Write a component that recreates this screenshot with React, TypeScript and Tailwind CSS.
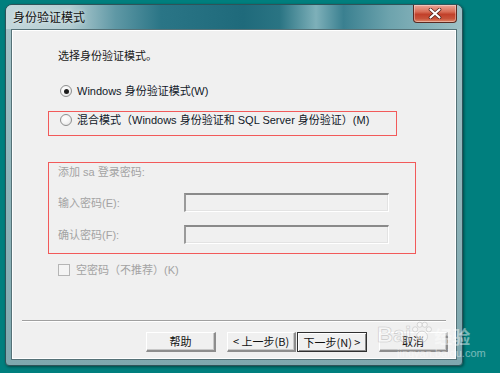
import React from "react";

const font = { fontFamily: '"Liberation Sans", "Noto Sans CJK SC", sans-serif' };

function Radio({ checked }: { checked?: boolean }) {
  return (
    <span className="w-[12px] h-[12px] rounded-full border border-[#8e8f8f] bg-[radial-gradient(circle_at_40%_35%,#ffffff_0%,#f4f4f4_50%,#d8d8d8_100%)] flex items-center justify-center shrink-0">
      {checked && <span className="w-[5px] h-[5px] rounded-full bg-[#1d1d1d]" />}
    </span>
  );
}

function Input() {
  return (
    <div className="w-[205px] h-[19px] bg-[#f0f0f0] border-t-2 border-l-2 border-b border-r border-t-[#8a8a8a] border-l-[#9a9a9a] border-b-[#ffffff] border-r-[#ffffff] shadow-[inset_-1px_-1px_0_#e3e3e3]" />
  );
}

function Btn({ children, w, focus }: { children: React.ReactNode; w: string; focus?: boolean }) {
  return (
    <div
      className={
        "h-[20px] flex items-center justify-center text-[11px] text-[#111] bg-[#f0f0f0] " +
        w +
        (focus
          ? " border border-[#303030] shadow-[inset_1px_1px_0_#ffffff,inset_-1px_-1px_0_#8a8a8a]"
          : " border-t border-l border-b-2 border-r-2 border-t-[#ffffff] border-l-[#ffffff] border-b-[#8d8d8d] border-r-[#8d8d8d] shadow-[inset_-1px_-1px_0_#c8c8c8]")
      }
      style={{ fontFamily: '"Noto Sans CJK SC", "Liberation Mono", monospace' }}
    >
      {children}
    </div>
  );
}

export default function App() {
  return (
    <div className="w-[500px] h-[373px] bg-[#007f7e] overflow-hidden relative pt-[4px] pl-[5px]" style={font}>
      <div className="w-[458px] h-[362px] rounded-t-[7px] rounded-b-[4px] border border-[#2f5359] bg-[linear-gradient(180deg,#a7c4c9_0%,#8fb4ba_50%,#7fa8af_100%)] flex flex-col shadow-[1px_1px_3px_rgba(0,0,0,0.45)]">
        {/* Title bar */}
        <div className="h-[24px] rounded-t-[6px] flex items-start justify-between bg-[linear-gradient(90deg,#c3d7db_0%,#b3cdd2_14%,#5f98a5_24%,#2a7586_34%,#1f6a7b_52%,#2a7483_60%,#7eb0b9_68%,#3a8090_74%,#6da3ad_84%,#9fc1c7_100%)]">
          <div className="pl-[7px] pt-[4px] text-[12px] leading-[16px] text-[#111] [text-shadow:0_0_4px_rgba(255,255,255,0.9)]" style={{ fontFamily: '"Noto Sans CJK SC", sans-serif' }}>
            身份验证模式
          </div>
          <div className="mr-[5px] w-[44px] h-[18px] rounded-b-[4px] border border-t-0 border-[#5a2a22] bg-[linear-gradient(180deg,#e9a597_0%,#d86d56_40%,#c1402a_55%,#c8533a_80%,#e08a6c_100%)] flex items-center justify-center shadow-[inset_0_0_0_1px_rgba(255,255,255,0.35)]">
            <svg width="14" height="11" viewBox="0 0 14 11">
              <path d="M2.5 1.5 L11.5 9.5 M11.5 1.5 L2.5 9.5" stroke="#4a1a14" strokeWidth="3.6" strokeLinecap="round" />
              <path d="M2.5 1.5 L11.5 9.5 M11.5 1.5 L2.5 9.5" stroke="#ffffff" strokeWidth="2.2" strokeLinecap="round" />
            </svg>
          </div>
        </div>

        {/* Client area */}
        <div className="mx-[5px] h-[331px] border border-[#557177] bg-white p-px">
          <div className="w-full h-full bg-[#f0f0f0] flex flex-col text-[11px] text-[#1a1a1a]">
            <div className="mt-[18px] ml-[45px] h-[14px] leading-[14px]">选择身份验证模式。</div>

            <div className="mt-[21px] ml-[47px] h-[14px] flex items-center gap-[5px]">
              <Radio checked />
              <span className="leading-[14px] text-[#101828]">Windows 身份验证模式(W)</span>
            </div>

            <div className="mt-[13px] ml-[35px] w-[349px] h-[25px] border-[1.5px] border-[#f25a5a] pl-[11px]">
              <div className="h-[14px] mt-[1px] flex items-center gap-[5px]">
                <Radio />
                <span className="leading-[14px] text-[#101828]">混合模式（Windows 身份验证和 SQL Server 身份验证）(M)</span>
              </div>
            </div>

            <div className="mt-[26px] ml-[35px] w-[368px] h-[92px] border-[1.5px] border-[#f25a5a] pl-[9px] pt-[2px] flex flex-col text-[#a3a3a3]">
              <div className="h-[14px] leading-[14px]">添加 sa 登录密码:</div>
              <div className="mt-[14px] h-[19px] flex items-center">
                <span className="w-[126px] leading-[14px]">输入密码(E):</span>
                <Input />
              </div>
              <div className="mt-[13px] h-[19px] flex items-center">
                <span className="w-[126px] leading-[14px]">确认密码(F):</span>
                <Input />
              </div>
            </div>

            <div className="mt-[9px] ml-[45px] h-[14px] flex items-center gap-[6px] text-[#a3a3a3]">
              <span className="w-[12px] h-[12px] border border-[#b5b5b5] bg-[#f4f4f4] shrink-0" />
              <span className="leading-[14px]">空密码（不推荐）(K)</span>
            </div>

            <div className="mt-[43px] ml-[9px] w-[424px] h-[2px] border-t border-t-[#a0a0a0] border-b border-b-white" />

            <div className="mt-[10px] ml-[133px] flex items-start">
              <Btn w="w-[70px]">帮助</Btn>
              <div className="w-[11px]" />
              <Btn w="w-[69px]">&lt; 上一步(B)</Btn>
              <div className="w-[1px]" />
              <Btn w="w-[70px]" focus>下一步(N) &gt;</Btn>
              <div className="w-[12px]" />
              <Btn w="w-[69px]">取消</Btn>
            </div>
          </div>
        </div>
      </div>

      {/* Watermark */}
      <div className="absolute left-[377px] top-[321px] flex flex-col items-start pointer-events-none opacity-45">
        <div className="flex items-end">
          <span className="text-[22px] leading-[24px] font-bold text-white [-webkit-text-stroke:0.6px_#9a9a9a]" style={{ fontFamily: '"Liberation Sans", sans-serif' }}>Bai</span>
          <svg width="22" height="24" viewBox="0 0 24 26" className="mb-[2px]">
            <circle cx="12" cy="17" r="6" fill="#fff" stroke="#9a9a9a" strokeWidth="0.8" />
            <circle cx="4.5" cy="9" r="2.8" fill="#fff" stroke="#9a9a9a" strokeWidth="0.8" />
            <circle cx="9.5" cy="4" r="2.8" fill="#fff" stroke="#9a9a9a" strokeWidth="0.8" />
            <circle cx="15" cy="4" r="2.8" fill="#fff" stroke="#9a9a9a" strokeWidth="0.8" />
            <circle cx="19.5" cy="9" r="2.8" fill="#fff" stroke="#9a9a9a" strokeWidth="0.8" />
          </svg>
          <span className="text-[18px] leading-[22px] font-bold text-white ml-[1px]" style={{ fontFamily: '"Noto Sans CJK SC", sans-serif' }}>经验</span>
        </div>
        <span className="text-[11px] leading-[12px] text-white ml-[20px]" style={{ fontFamily: '"Liberation Sans", sans-serif' }}>jingyan.baidu.com</span>
      </div>
    </div>
  );
}
